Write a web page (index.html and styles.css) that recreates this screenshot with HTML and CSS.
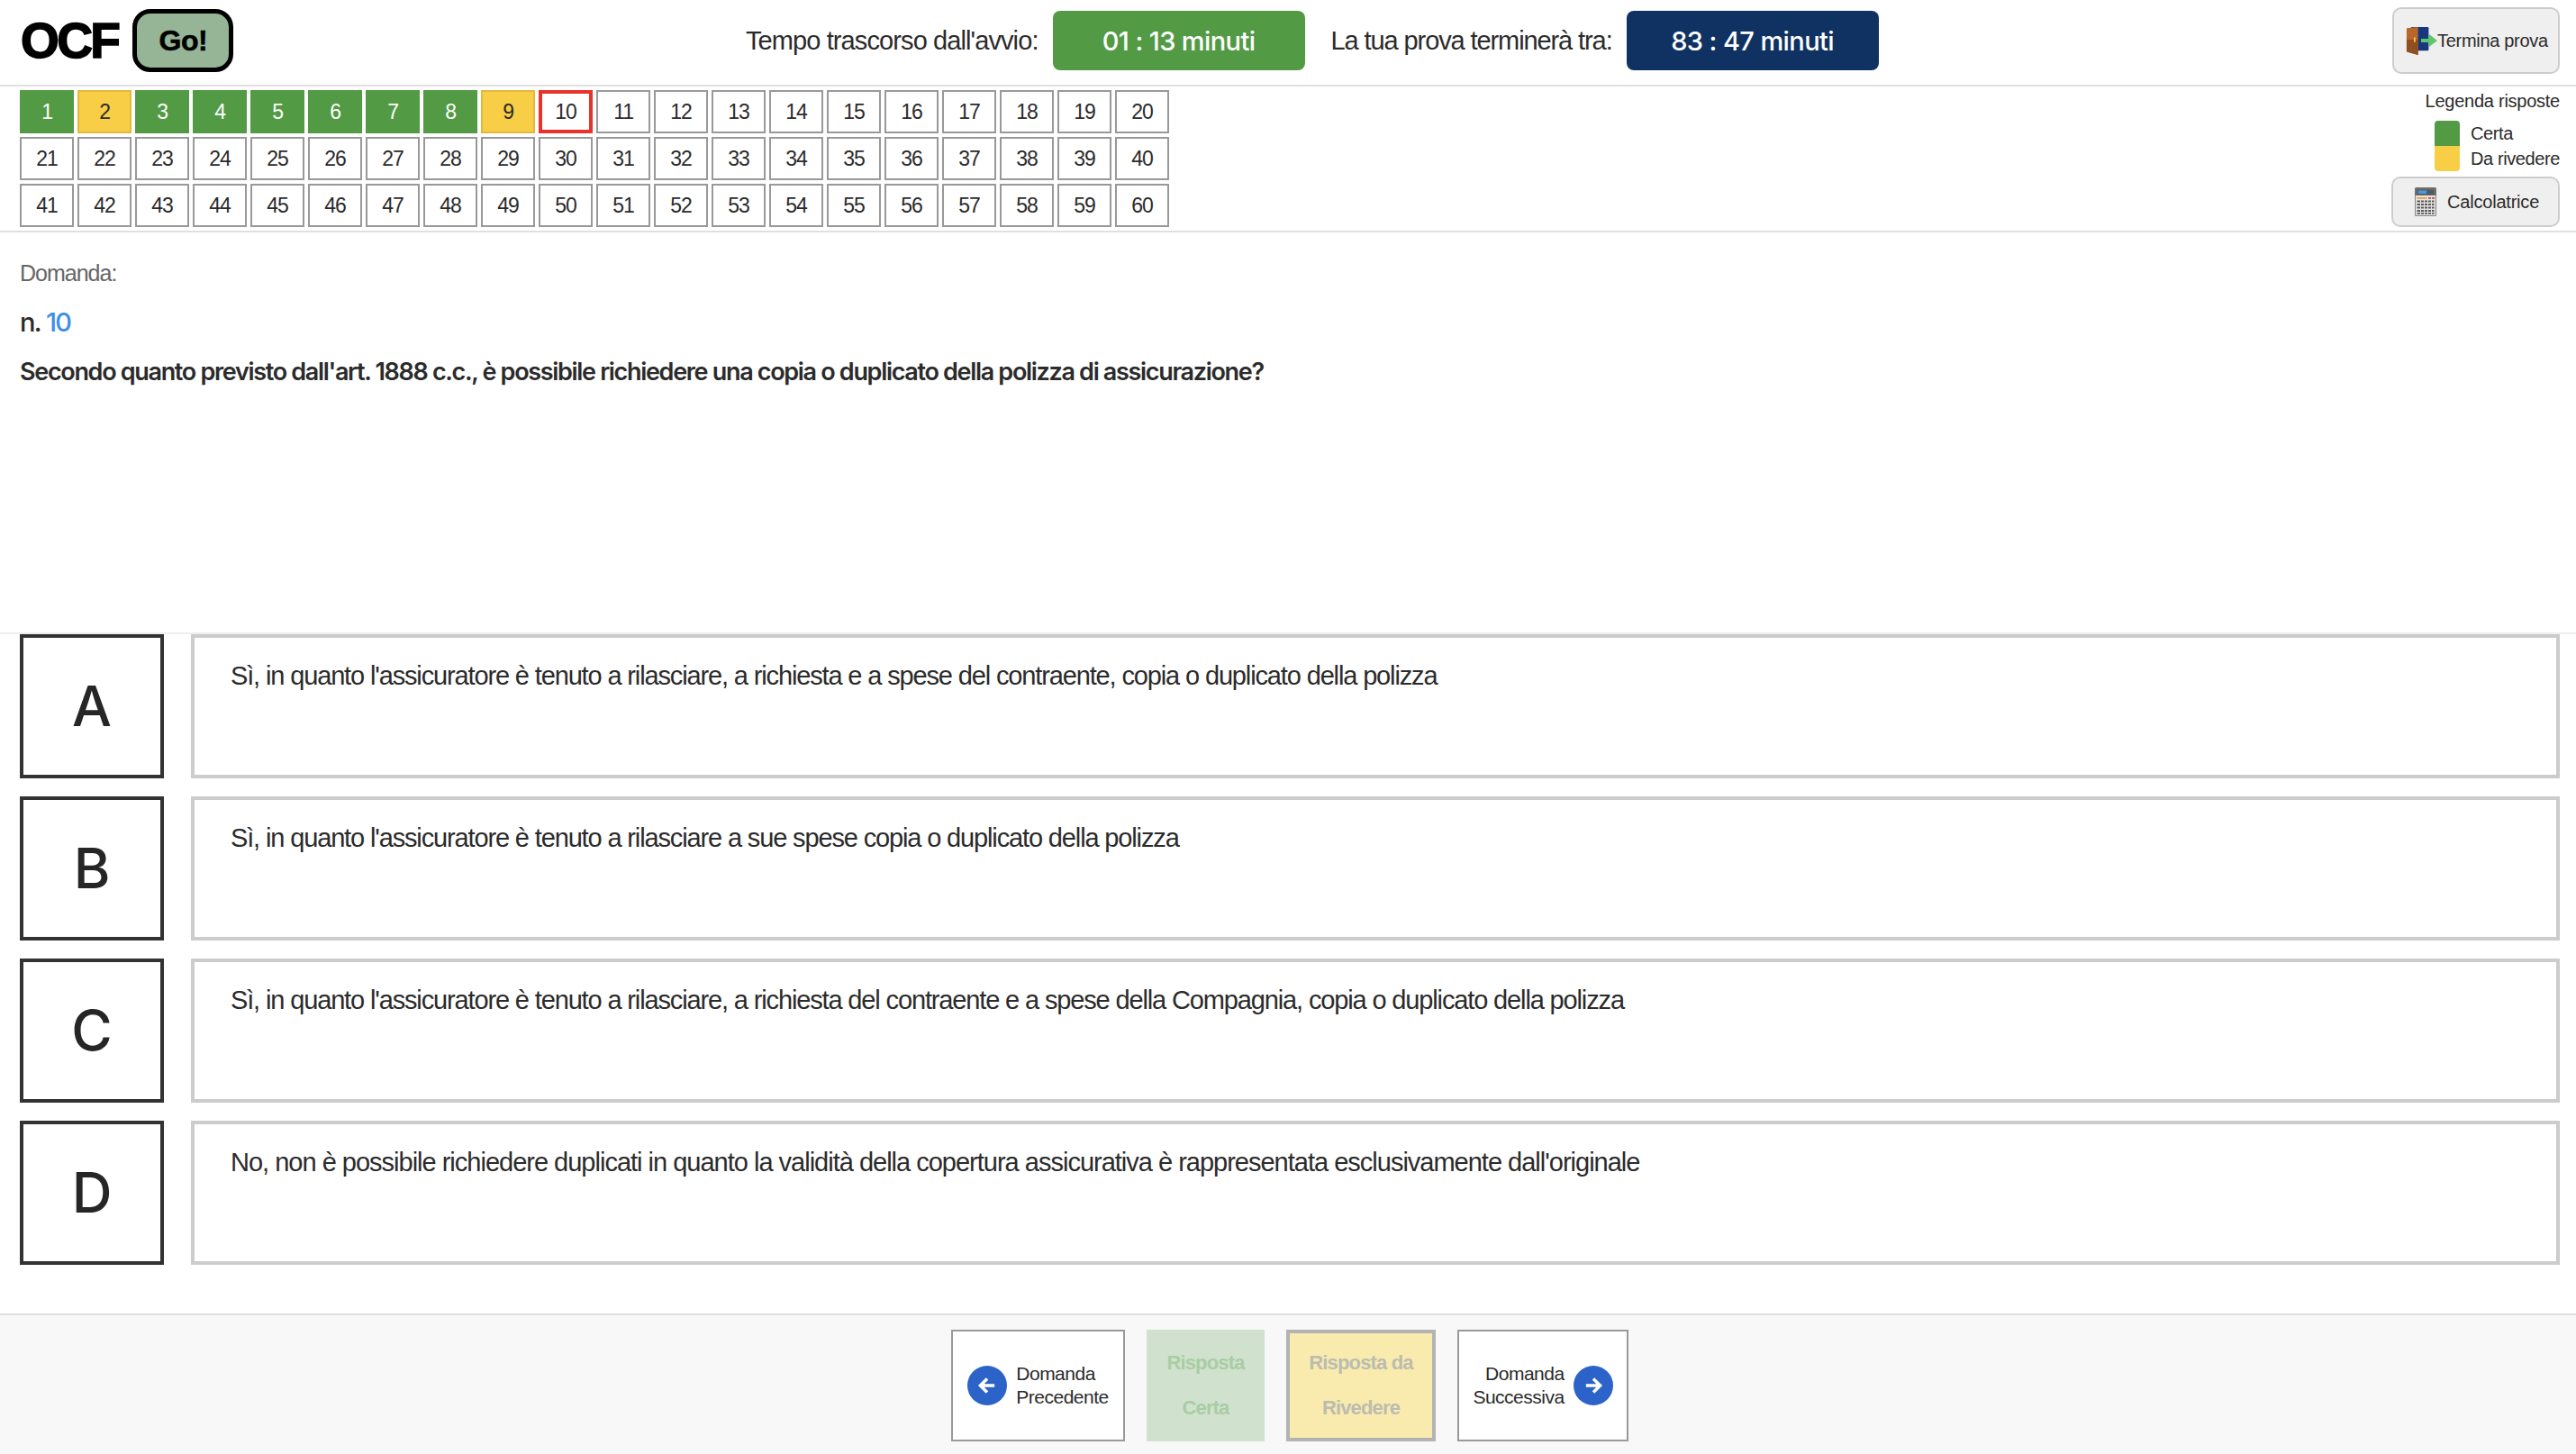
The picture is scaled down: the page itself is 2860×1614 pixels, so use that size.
FILE: index.html
```html
<!DOCTYPE html>
<html lang="it">
<head>
<meta charset="utf-8">
<title>OCF Go!</title>
<link rel="stylesheet" href="styles.css">
</head>
<body>
<div class="page">
  <header class="topbar">
    <div class="brand"><span class="brand-name">OCF</span><span class="brand-go">Go!</span></div>
    <div class="timers">
      <span class="timer-label timer-label-first">Tempo trascorso dall'avvio:</span>
      <span class="timer timer-green">01 : 13 minuti</span>
      <span class="timer-label timer-label-second">La tua prova terminerà tra:</span>
      <span class="timer timer-blue">83 : 47 minuti</span>
    </div>
    <button class="tool-btn end-btn">
      <svg class="door-icon" viewBox="0 0 34 34" aria-hidden="true">
        <rect x="6" y="1" width="21" height="28" rx="1.5" fill="#17387f"/>
        <path d="M1 2.500 14.500 1 V34 L2 30.500 a1.500 1.500 0 0 1 -1 -1.500z" fill="#b9662a"/>
        <path d="M1 16 H14.500 V34 L2 30.500 a1.500 1.500 0 0 1 -1 -1.500z" fill="#8f4f1f"/>
        <rect x="9.500" y="13" width="2" height="6" rx="1" fill="#f0c545"/>
      </svg>
      <svg class="door-arrow" viewBox="0 0 18 14" aria-hidden="true"><path d="M0 5h9V0l9 7-9 7V9H0z" fill="#5cc866"/></svg>
      <span>Termina prova</span>
    </button>
  </header>

  <section class="navbar">
    <div class="grid" id="grid">
      <a class="cell done">1</a><a class="cell review">2</a><a class="cell done">3</a><a class="cell done">4</a><a class="cell done">5</a><a class="cell done">6</a><a class="cell done">7</a><a class="cell done">8</a><a class="cell review">9</a><a class="cell current">10</a><a class="cell">11</a><a class="cell">12</a><a class="cell">13</a><a class="cell">14</a><a class="cell">15</a><a class="cell">16</a><a class="cell">17</a><a class="cell">18</a><a class="cell">19</a><a class="cell">20</a>
      <a class="cell">21</a><a class="cell">22</a><a class="cell">23</a><a class="cell">24</a><a class="cell">25</a><a class="cell">26</a><a class="cell">27</a><a class="cell">28</a><a class="cell">29</a><a class="cell">30</a><a class="cell">31</a><a class="cell">32</a><a class="cell">33</a><a class="cell">34</a><a class="cell">35</a><a class="cell">36</a><a class="cell">37</a><a class="cell">38</a><a class="cell">39</a><a class="cell">40</a>
      <a class="cell">41</a><a class="cell">42</a><a class="cell">43</a><a class="cell">44</a><a class="cell">45</a><a class="cell">46</a><a class="cell">47</a><a class="cell">48</a><a class="cell">49</a><a class="cell">50</a><a class="cell">51</a><a class="cell">52</a><a class="cell">53</a><a class="cell">54</a><a class="cell">55</a><a class="cell">56</a><a class="cell">57</a><a class="cell">58</a><a class="cell">59</a><a class="cell">60</a>
    </div>
    <aside class="side">
      <div class="legend-title">Legenda risposte</div>
      <div class="legend-row"><i class="swatch swatch-green"></i><span class="legend-text">Certa</span></div>
      <div class="legend-row"><i class="swatch swatch-yellow"></i><span class="legend-text">Da rivedere</span></div>
      <button class="tool-btn calc-btn">
        <svg class="calc-icon" viewBox="0 0 24 32" aria-hidden="true">
          <rect x="0" y="0" width="24" height="32" rx="1.500" fill="#6f6f6f"/>
          <rect x="0.800" y="9" width="22.400" height="22.200" fill="#e4e4e4"/>
          <rect x="2.500" y="2.500" width="19" height="5.500" fill="#4f5c68"/>
          <rect x="4" y="3.500" width="9" height="3.500" fill="#4a9ad8"/>
          <rect x="2.500" y="11" width="11" height="1.800" fill="#e9a53c"/>
          <rect x="15" y="11" width="3" height="1.800" fill="#c0504d"/>
          <rect x="19" y="11" width="3" height="1.800" fill="#c0504d"/>
          <path d="M2.500 14.500h19v2h-19zM2.500 18h19v2h-19zM2.500 21.500h19v2h-19zM2.500 25h19v2h-19zM2.500 28h19v1.800h-19z" fill="#5a5a5a"/>
          <path d="M6.500 14v16M10.500 14v16M14.500 14v16M18.500 14v16" stroke="#e4e4e4" stroke-width="1"/>
        </svg>
        <span>Calcolatrice</span>
      </button>
    </aside>
  </section>

  <main class="question">
    <p class="q-label">Domanda:</p>
    <p class="q-number">n. <span class="q-num-value">10</span></p>
    <p class="q-text">Secondo quanto previsto dall'art. 1888 c.c., è possibile richiedere una copia o duplicato della polizza di assicurazione?</p>
  </main>

  <section class="answers">
    <div class="answer"><div class="letter">A</div><div class="answer-text">Sì, in quanto l'assicuratore è tenuto a rilasciare, a richiesta e a spese del contraente, copia o duplicato della polizza</div></div>
    <div class="answer"><div class="letter">B</div><div class="answer-text">Sì, in quanto l'assicuratore è tenuto a rilasciare a sue spese copia o duplicato della polizza</div></div>
    <div class="answer"><div class="letter">C</div><div class="answer-text">Sì, in quanto l'assicuratore è tenuto a rilasciare, a richiesta del contraente e a spese della Compagnia, copia o duplicato della polizza</div></div>
    <div class="answer"><div class="letter">D</div><div class="answer-text answer-text-d">No, non è possibile richiedere duplicati in quanto la validità della copertura assicurativa è rappresentata esclusivamente dall'originale</div></div>
  </section>

  <footer class="footer">
    <button class="foot-btn nav-prev">
      <span class="circle"><svg viewBox="0 0 24 24" aria-hidden="true"><path d="M19 12H6M12 5.500 5.500 12l6.500 6.500" fill="none" stroke="#fff" stroke-width="3"/></svg></span>
      <span class="nav-label nav-label-left">Domanda<br>Precedente</span>
    </button>
    <button class="foot-btn act-certa">Risposta<br>Certa</button>
    <button class="foot-btn act-rivedere">Risposta da<br>Rivedere</button>
    <button class="foot-btn nav-next">
      <span class="nav-label nav-label-right">Domanda<br>Successiva</span>
      <span class="circle"><svg viewBox="0 0 24 24" aria-hidden="true"><path d="M5 12h13M12 5.500l6.500 6.500-6.500 6.500" fill="none" stroke="#fff" stroke-width="3"/></svg></span>
    </button>
  </footer>
</div>
</body>
</html>
```

FILE: styles.css
```css
* { box-sizing: border-box; }
html, body { margin: 0; padding: 0; background: #fff; }
body { font-family: "Liberation Sans", Arial, sans-serif; color: #2b2b2b; }
p { margin: 0; }
button { font-family: inherit; color: inherit; cursor: pointer; }
.page { width: 2860px; height: 1614px; display: flex; flex-direction: column; overflow: hidden; }

.topbar { height: 96px; flex: none; display: flex; align-items: center; border-bottom: 2px solid #e0e0e0; padding: 0 18px 4px 23px; position: relative; }
.brand { display: flex; align-items: center; gap: 16px; width: 805px; }
.brand-name { font-size: 55px; font-weight: 700; color: #000; letter-spacing: -2.6px; -webkit-text-stroke: 1.6px #000; line-height: 70px; }
.brand-go { width: 112px; height: 70px; border: 5px solid #000; border-radius: 20px; background: #96b496; color: #000; font-size: 32px; font-weight: 700; letter-spacing: -0.5px; -webkit-text-stroke: 0.6px #000; display: flex; align-items: center; justify-content: center; }
.timers { display: flex; align-items: center; flex: 1; }
.timer-label { font-size: 29px; letter-spacing: -0.9px; white-space: nowrap; }
.timer-label-first { margin-right: 16px; }
.timer-label-second { margin: 0 16px 0 29px; letter-spacing: -1.1px; }
.timer { width: 280px; height: 66px; border-radius: 8px; color: #fff; font-family: Inter, "Liberation Sans", sans-serif; font-weight: 500; font-size: 29px; letter-spacing: -0.6px; display: flex; align-items: center; justify-content: center; }
.timer-green { background: #529a44; }
.timer-blue { background: #0f3263; }

.tool-btn { background: #efefef; border: 2px solid #cdcdcd; border-radius: 10px; display: flex; align-items: center; padding: 0; }
.end-btn { width: 186px; height: 74px; font-size: 20px; letter-spacing: -0.3px; padding-left: 13px; white-space: nowrap; }
.door-icon { width: 32px; height: 32px; flex: none; }
.door-arrow { width: 18px; height: 14px; flex: none; margin-left: -15px; position: relative; }

.navbar { height: 162px; flex: none; display: flex; justify-content: space-between; border-bottom: 2px solid #e0e0e0; padding: 4px 18px 0 22px; }
.grid { display: grid; grid-template-columns: repeat(20, 60px); grid-auto-rows: 48px; gap: 4px; align-content: start; }
.cell { border: 2px solid #999; background: #fff; font-size: 23px; letter-spacing: -1.1px; display: flex; align-items: center; justify-content: center; }
.cell.done { background: #529a44; border-color: #529a44; color: #fff; }
.cell.review { background: #f7ce45; border-color: #e2b93f; }
.cell.current { border: 4px solid #e8322a; }

.side { width: 188px; display: flex; flex-direction: column; align-items: flex-end; }
.legend-title { font-size: 20px; letter-spacing: -0.25px; line-height: 24px; margin: 0 0 10px; }
.legend-row { display: flex; align-items: center; height: 28px; width: 139px; gap: 12px; }
.legend-text { font-size: 20px; letter-spacing: -0.4px; white-space: nowrap; }
.swatch { width: 28px; height: 28px; flex: none; }
.swatch-green { background: #529a44; border-radius: 4px 4px 0 0; }
.swatch-yellow { background: #f7ce45; border-radius: 0 0 4px 4px; }
.calc-btn { width: 187px; height: 56px; margin-top: 6px; font-size: 20px; letter-spacing: -0.2px; padding-left: 24px; gap: 12px; }
.calc-icon { width: 24px; height: 32px; flex: none; }

.question { height: 446px; flex: none; padding: 30px 22px 0; border-bottom: 2px solid #eee; }
.q-label { font-size: 25px; letter-spacing: -1px; color: #666; line-height: 30px; }
.q-number { font-size: 29px; letter-spacing: -1.6px; line-height: 36px; margin-top: 22px; font-family: Inter, "Liberation Sans", sans-serif; font-weight: 500; }
.q-num-value { color: #3f8ee6; }
.q-text { font-size: 27px; letter-spacing: -1.32px; line-height: 34px; margin-top: 20px; font-family: Inter, "Liberation Sans", sans-serif; font-weight: 600; }

.answers { flex: 1; display: flex; flex-direction: column; gap: 20px; padding: 0 18px 0 22px; }
.answer { display: flex; height: 160px; gap: 30px; flex: none; }
.letter { width: 160px; flex: none; border: 4px solid #333; font-family: Inter, "Liberation Sans", sans-serif; font-weight: 500; font-size: 62px; display: flex; align-items: center; justify-content: center; color: #262626; padding-bottom: 2px; }
.answer-text { flex: 1; border: 4px solid #ccc; padding: 24px 40px; font-size: 29px; letter-spacing: -1.14px; line-height: 36px; }
.answer-text-d { letter-spacing: -1px; }

.footer { height: 156px; flex: none; background: #f8f8f8; border-top: 2px solid #e0e0e0; display: flex; justify-content: center; align-items: flex-start; gap: 24px; padding: 16px 0 0 4px; }
.foot-btn { height: 124px; background: #fff; border: 2px solid #999; padding: 0; font-size: 22px; letter-spacing: -0.4px; display: flex; align-items: center; justify-content: center; }
.nav-prev { width: 193px; gap: 10px; }
.nav-next { width: 190px; gap: 10px; }
.circle { width: 44px; height: 44px; border-radius: 50%; background: #2b63c8; display: flex; align-items: center; justify-content: center; flex: none; }
.circle svg { width: 28px; height: 28px; }
.nav-label { line-height: 26px; font-size: 21px; letter-spacing: -0.5px; white-space: nowrap; }
.nav-label-left { text-align: left; }
.nav-label-right { text-align: right; }
.act-certa { width: 131px; background: #d0e2ce; border-color: #d0e2ce; color: #aaccA4; line-height: 50px; font-size: 22px; font-weight: 700; letter-spacing: -0.85px; }
.act-rivedere { width: 166px; background: #f9ebae; border: 4px solid #b3b3b3; color: #bcbcb0; line-height: 50px; font-size: 22px; font-weight: 700; letter-spacing: -0.85px; }
```
